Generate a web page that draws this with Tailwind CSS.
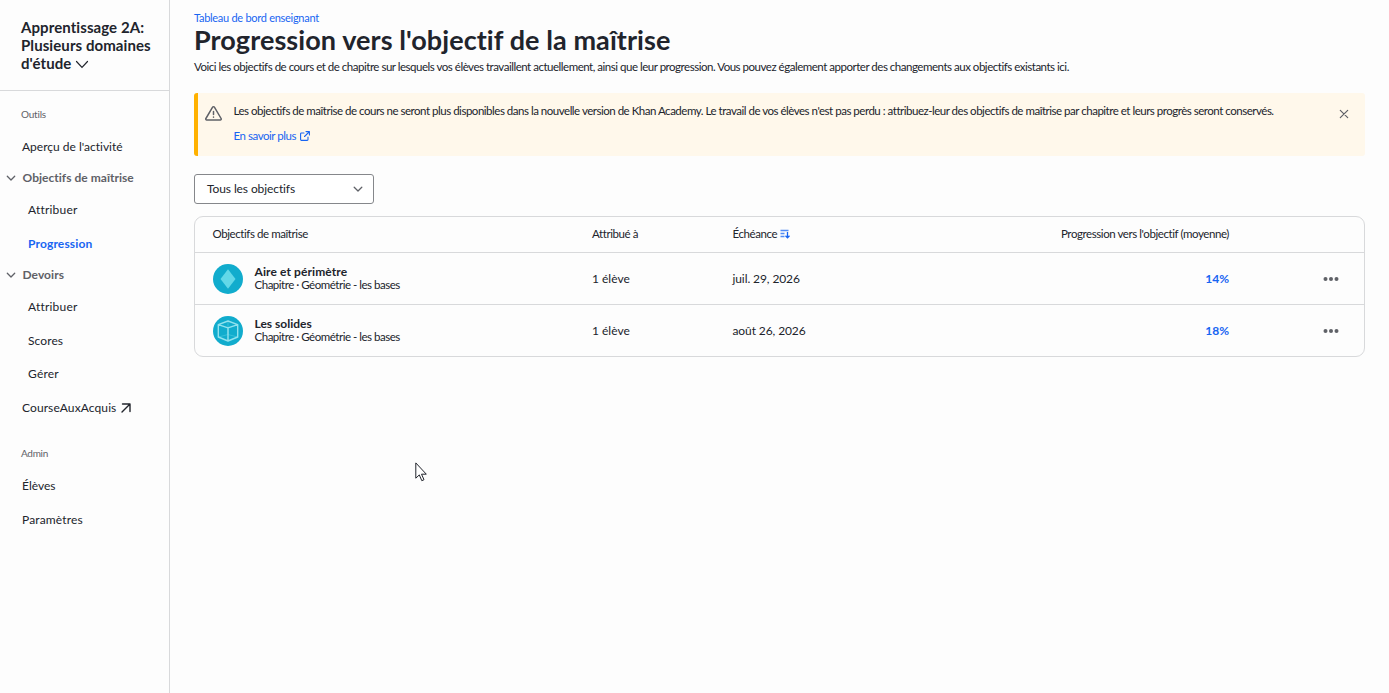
<!DOCTYPE html>
<html lang="fr">
<head>
    <meta charset="UTF-8">
    <meta name="viewport" content="width=device-width, initial-scale=1.0">
    <title>Progression vers l'objectif de la maîtrise</title>
    <script src="https://cdn.jsdelivr.net/npm/@tailwindcss/browser@4"></script>
</head>
<body class="bg-[#fdfdfd] font-['Lato',sans-serif] [font-variant-ligatures:none] text-[#21242c] text-xs overflow-hidden">

    <div class="flex h-screen">

        <!-- SIDEBAR -->
        <aside class="w-[170px] shrink-0 border-r border-[#d8d9db]">
            <div class="h-[91px] border-b border-[#d8d9db] pl-[21px] pt-[18px] text-[15px] leading-[18px] font-bold tracking-[0.08px] whitespace-nowrap">
                Apprentissage 2A:<br>
                Plusieurs domaines<br>
                d'étude
                <svg class="inline h-[9px] w-3.5 -mt-0.5" viewBox="0 0 14 9" fill="none" stroke="currentColor" stroke-width="1.2" stroke-linecap="round"><path d="M1.5 1.5 7 7.3 12.5 1.5" /></svg>
            </div>

            <nav class="flex flex-col whitespace-nowrap">
                <p class="mt-3.5 h-5 flex items-center pl-[21px] text-[10px] tracking-[-0.2px] text-[#5f6167]">Outils</p>
                <a href="#" class="mt-[5px] h-[33px] flex items-center pl-[22px]">Aperçu de l'activité</a>
                <div class="h-[30px] flex items-center pl-1.5 text-[#5f6167]">
                    <svg class="h-2.5 w-2.5 mr-[6.5px]" viewBox="0 0 10 10" fill="none" stroke="currentColor" stroke-width="1.3" stroke-linecap="round" stroke-linejoin="round"><path d="M1.3 3.3 5 7l3.7-3.7" /></svg>
                    <span class="font-bold tracking-[0.03px]">Objectifs de maîtrise</span>
                </div>
                <a href="#" class="h-[34px] flex items-center pl-7 tracking-[0.2px]">Attribuer</a>
                <a href="#" class="h-[33px] flex items-center pl-7 font-bold tracking-[0.15px] text-[#1865f2]">Progression</a>
                <div class="h-[30px] flex items-center pl-1.5 text-[#5f6167]">
                    <svg class="h-2.5 w-2.5 mr-[6.5px]" viewBox="0 0 10 10" fill="none" stroke="currentColor" stroke-width="1.3" stroke-linecap="round" stroke-linejoin="round"><path d="M1.3 3.3 5 7l3.7-3.7" /></svg>
                    <span class="font-bold tracking-[0.05px]">Devoirs</span>
                </div>
                <a href="#" class="h-[34px] flex items-center pl-7 tracking-[0.2px]">Attribuer</a>
                <a href="#" class="h-[33px] flex items-center pl-7 tracking-[0.1px]">Scores</a>
                <a href="#" class="h-[34px] flex items-center pl-7 tracking-[0.2px]">Gérer</a>
                <a href="#" class="h-[33px] flex items-center pl-[22px] tracking-[0.1px]">
                    CourseAuxAcquis
                    <svg class="h-2.5 w-2.5 ml-[5px]" viewBox="0 0 10 10" fill="none" stroke="currentColor" stroke-width="1.4" stroke-linecap="round" stroke-linejoin="round"><path d="M1.5 1H9v7.5M9 1 1 9" /></svg>
                </a>
                <p class="mt-5 h-5 flex items-center pl-[21px] text-[10px] tracking-[-0.3px] text-[#5f6167]">Admin</p>
                <a href="#" class="mt-[5px] h-[33px] flex items-center pl-[22px]">Élèves</a>
                <a href="#" class="h-9 flex items-center pl-[22px] tracking-[0.15px]">Paramètres</a>
            </nav>
        </aside>

        <!-- MAIN CONTENT -->
        <main class="w-[1171px] ml-6 pt-2.5 whitespace-nowrap">
            <a href="#" class="block w-fit h-4 leading-4 text-[11px] tracking-[-0.28px] text-[#1865f2]">Tableau de bord enseignant</a>
            <h1 class="w-fit h-[30px] leading-[28px] text-[27px] font-bold tracking-[0.08px]">Progression vers l'objectif de la maîtrise</h1>
            <p class="w-fit mt-[3px] h-4 leading-4 text-[11.5px] tracking-[-0.48px]">Voici les objectifs de cours et de chapitre sur lesquels vos élèves travaillent actuellement, ainsi que leur progression. Vous pouvez également apporter des changements aux objectifs existants ici.</p>

            <!-- BANNER -->
            <div class="mt-[18px] h-[63px] flex rounded-[3px] overflow-hidden border-l-4 border-[#ffb100] bg-[#fff8eb]">
                <svg class="mt-3 ml-[6.5px] h-[17px] w-[17px] shrink-0 text-[#5f6167]" viewBox="0 0 17 17" fill="none" stroke="currentColor" stroke-width="1.5" stroke-linejoin="round" stroke-linecap="round"><path d="M7.6 2.2.9 13.5c-.4.7 0 1.5.8 1.5h13.6c.8 0 1.2-.8.8-1.5L9.4 2.2c-.4-.7-1.4-.7-1.8 0z" /><path d="M8.5 6.5v3M8.5 12v.2" /></svg>
                <div class="ml-3 pt-2.5 text-[11.5px] tracking-[-0.482px]">
                    <p class="w-fit h-4 leading-4">Les objectifs de maîtrise de cours ne seront plus disponibles dans la nouvelle version de Khan Academy. Le travail de vos élèves n'est pas perdu : attribuez-leur des objectifs de maîtrise par chapitre et leurs progrès seront conservés.</p>
                    <a href="#" class="mt-[9px] h-4 w-fit flex items-center tracking-[-0.45px] text-[#1865f2]">
                        En savoir plus
                        <svg class="ml-1 h-2.5 w-2.5" viewBox="0 0 10 10" fill="none" stroke="currentColor" stroke-width="1.1" stroke-linecap="round" stroke-linejoin="round"><path d="M4 2H1.4a.8.8 0 0 0-.8.8v5.8c0 .4.4.8.8.8h5.8c.4 0 .8-.4.8-.8V6M6 .6h3.4V4M9.2.8 4.5 5.5" /></svg>
                    </a>
                </div>
                <svg class="ml-auto mr-4 mt-4 h-2.5 w-2.5 shrink-0 text-[#5f6167]" viewBox="0 0 10 10" fill="none" stroke="currentColor" stroke-width="1.2" stroke-linecap="round"><path d="m1.3 1.3 7.4 7.4M8.7 1.3 1.3 8.7" /></svg>
            </div>

            <!-- FILTER -->
            <button type="button" class="mt-[18px] h-[30px] w-[180px] flex items-center justify-between rounded-[3px] border border-[#85878b] bg-white pl-3 pr-2.5">
                <span class="tracking-[-0.1px]">Tous les objectifs</span>
                <svg class="h-2.5 w-2.5 text-[#5f6167]" viewBox="0 0 10 10" fill="none" stroke="currentColor" stroke-width="1.3" stroke-linecap="round" stroke-linejoin="round"><path d="M1.2 3.3 5 7l3.8-3.7" /></svg>
            </button>

            <!-- TABLE -->
            <div class="mt-3 rounded-[9px] border border-[#d8d9db]">
                <div class="h-[35px] pb-0.5 flex items-center text-[11.5px] tracking-[-0.42px]">
                    <div class="w-[397px] pl-[17.5px]">Objectifs de maîtrise</div>
                    <div class="w-[140px]">Attribué à</div>
                    <div class="w-[240px] pl-[0.5px] flex items-center">
                        Échéance
                        <svg class="ml-[3px] mt-0.5 h-2.5 w-2.5 text-[#1865f2]" viewBox="0 0 10 10" fill="none" stroke="currentColor" stroke-width="1.3"><path d="M.5 1.5h8M.5 4.5h4M.5 7.5h4" opacity=".75" /><path d="M7.5 3V9M5.5 6.8l2 2 2-2" /></svg>
                    </div>
                    <div class="w-[257px] text-right">Progression vers l'objectif (moyenne)</div>
                </div>

                <div class="h-[52px] flex items-center border-t border-[#d8d9db]">
                    <div class="w-[397px] pl-[18px] flex items-center">
                        <svg class="h-[30px] w-[30px]" viewBox="0 0 30 30"><circle cx="15" cy="15" r="15" fill="#11accd" /><path d="M15 5.3 22.5 15 15 24.7 7.5 15z" fill="#62d8e8" /></svg>
                        <div class="ml-[11.5px] -mt-0.5 leading-[13px]">
                            <p class="font-bold tracking-[0.1px]">Aire et périmètre</p>
                            <p class="text-[11.5px] tracking-[-0.48px]">Chapitre · Géométrie - les bases</p>
                        </div>
                    </div>
                    <div class="w-[140px]">1 élève</div>
                    <div class="w-[240px] pl-[0.5px] tracking-[-0.1px]">juil. 29, 2026</div>
                    <div class="w-[257px] text-right font-bold text-[#1865f2]">14%</div>
                    <svg class="ml-auto mr-[25px] h-4 w-4 text-[#5f6167]" viewBox="0 0 16 16" fill="currentColor"><circle cx="2.5" cy="8" r="2" /><circle cx="8" cy="8" r="2" /><circle cx="13.5" cy="8" r="2" /></svg>
                </div>

                <div class="h-[52px] flex items-center border-t border-[#d8d9db]">
                    <div class="w-[397px] pl-[18px] flex items-center">
                        <svg class="h-[30px] w-[30px]" viewBox="0 0 30 30" fill="none" stroke-linejoin="round"><circle cx="15" cy="15" r="15" fill="#11accd" /><path d="M5.5 21 15 18.5 24.5 21M15 5v13.5" stroke="#3fc4dc" stroke-width=".8" /><path d="M15 5 5.3 8.6V21L15 25l9.7-4V8.6zM5.3 8.6 15 11.8l9.7-3.2M15 11.8V25" stroke="#92e2ee" stroke-width="1.4" /></svg>
                        <div class="ml-[11.5px] -mt-0.5 leading-[13px]">
                            <p class="font-bold">Les solides</p>
                            <p class="text-[11.5px] tracking-[-0.48px]">Chapitre · Géométrie - les bases</p>
                        </div>
                    </div>
                    <div class="w-[140px]">1 élève</div>
                    <div class="w-[240px] pl-[0.5px] tracking-[-0.1px]">août 26, 2026</div>
                    <div class="w-[257px] text-right font-bold text-[#1865f2]">18%</div>
                    <svg class="ml-auto mr-[25px] h-4 w-4 text-[#5f6167]" viewBox="0 0 16 16" fill="currentColor"><circle cx="2.5" cy="8" r="2" /><circle cx="8" cy="8" r="2" /><circle cx="13.5" cy="8" r="2" /></svg>
                </div>
            </div>
        </main>
    </div>

    <!-- CURSOR -->
    <svg class="absolute left-[415px] top-[462px] h-5 w-3" viewBox="0 0 12 20" fill="#fff" stroke="#21242c" stroke-width="1"><path d="M.8.9v15.3l3.5-3.3 2.5 5.8 2.2-1-2.5-5.5h4.8z" /></svg>

</body>
</html>
